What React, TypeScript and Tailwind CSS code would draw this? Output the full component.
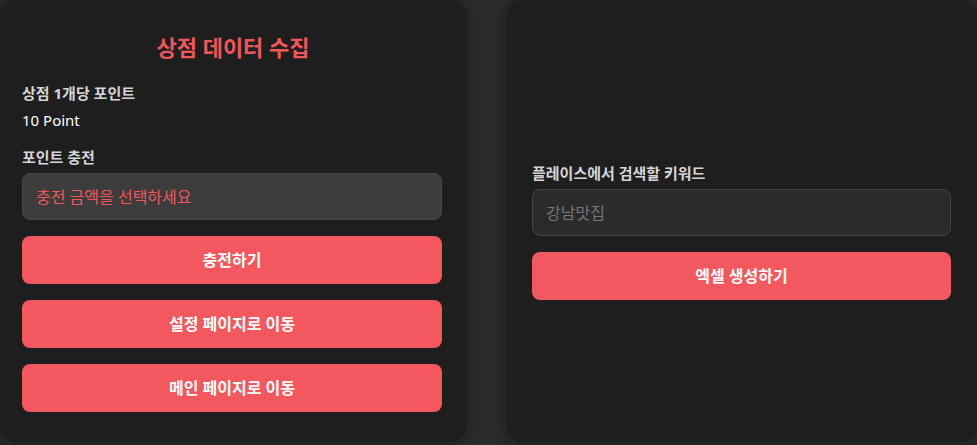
export default function App() {
  const font = { fontFamily: '"Noto Sans", "Noto Sans CJK KR", sans-serif' };

  return (
    <div
      className="h-[445px] w-[977px] overflow-hidden bg-[#2c2c2c] font-['Noto_Sans','Noto_Sans_CJK_KR',sans-serif]"
      style={font}
    >
      <div className="grid h-[442px] grid-cols-[466px_470px] gap-[41px]">
        {/* Store data card */}
        <div className="flex flex-col rounded-2xl bg-[#1e1e1e] px-[22px] pt-[32px] shadow-[0_0_18px_rgba(0,0,0,0.45)]">
          <h2 className="text-center text-[22px] leading-[30px] font-bold text-[#f1565b]">
            상점 데이터 수집
          </h2>

          <p className="mt-[21px] text-[15px] leading-[20px] font-bold text-[#d6d6d6]">
            상점 1개당 포인트
          </p>
          <p className="mt-[6px] text-[15px] leading-[22px] text-white">10 Point</p>

          <p className="mt-[16px] text-[15px] leading-[20px] font-bold text-[#d6d6d6]">
            포인트 충전
          </p>
          <div className="mt-[6px] flex h-[47px] w-[420px] items-center rounded-lg border border-[#474747] bg-[#3c3c3c] px-[13px] text-[16px] text-[#f1565b]">
            충전 금액을 선택하세요
          </div>

          <div className="mt-[16px] flex w-[420px] flex-col gap-4">
            {["충전하기", "설정 페이지로 이동", "메인 페이지로 이동"].map((label) => (
              <button
                key={label}
                className="h-12 rounded-lg bg-[#f2585d] text-[16px] font-bold text-white"
              >
                {label}
              </button>
            ))}
          </div>
        </div>

        {/* Excel card */}
        <div className="flex flex-col rounded-2xl bg-[#1e1e1e] px-[25px] pt-[163px] shadow-[0_0_18px_rgba(0,0,0,0.45)]">
          <p className="text-[15px] leading-[20px] font-bold text-[#d6d6d6]">
            플레이스에서 검색할 키워드
          </p>
          <input
            placeholder="강남맛집"
            className="mt-[6px] h-[47px] w-[419px] rounded-lg border border-[#444444] bg-[#2b2b2b] px-[13px] text-[16px] text-white outline-none placeholder:text-[#767676]"
          />
          <button className="mt-[16px] h-12 w-[419px] rounded-lg bg-[#f2585d] text-[16px] font-bold text-white">
            엑셀 생성하기
          </button>
        </div>
      </div>
    </div>
  );
}
